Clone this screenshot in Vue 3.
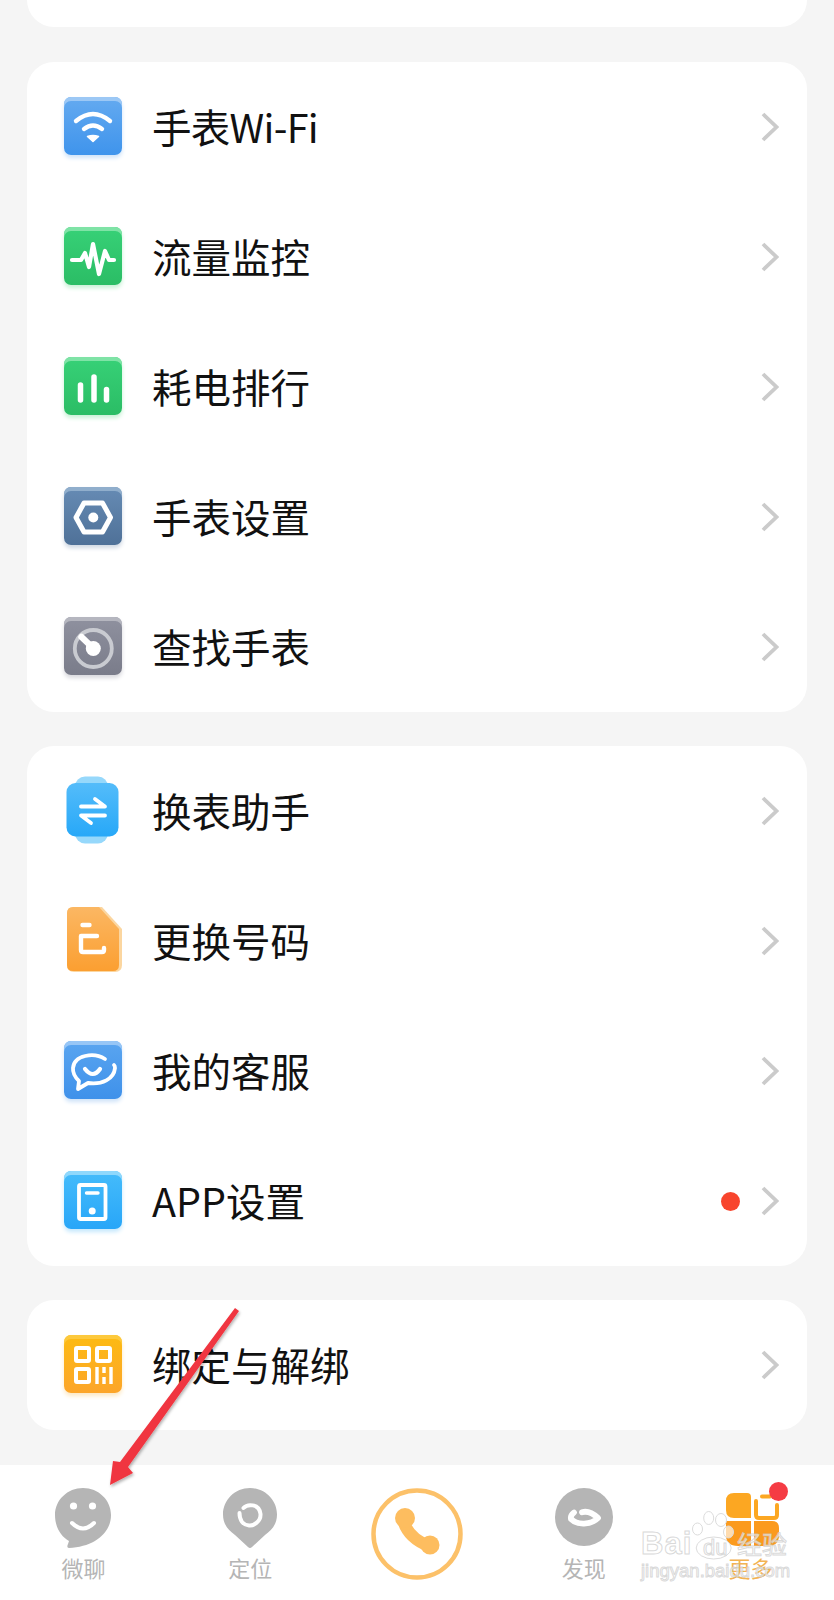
<template>
  <div class="page">
    <div class="stub"></div>

    <div v-for="(group, g) in groups" :key="g" class="card">
      <div v-for="row in group" :key="row.label" class="row">
        <div class="tile" :class="'t-' + row.icon">
          <svg viewBox="0 0 58 58" width="58" height="58" class="glyph">
            <g v-if="row.icon === 'wifi'" fill="none" stroke="#fff" stroke-width="4.4" stroke-linecap="round">
              <path d="M12 24 Q29 10 46 24" />
              <path d="M20 32 Q29 25 38 32" />
              <path d="M23.500 39.500 Q29 37.500 34.500 39.500 L29 44.500 Z" fill="#fff" stroke-width="1.500" stroke-linejoin="round" />
            </g>
            <path v-else-if="row.icon === 'flow'" d="M8 33 H17 L21 26 L25 40 L29 17 L35 47 L41 24 L45 33 H50" fill="none" stroke="#fff" stroke-width="4.2" stroke-linecap="round" stroke-linejoin="round" />
            <g v-else-if="row.icon === 'bars'" stroke="#fff" stroke-width="5.500" stroke-linecap="round">
              <path d="M16.500 28 V43" />
              <path d="M30 20 V43" />
              <path d="M42.500 32.500 V43" />
            </g>
            <g v-else-if="row.icon === 'hex'">
              <path d="M12 30.500 L20 16 H38.500 L46.500 30.500 L38.500 45 H20 Z" fill="none" stroke="#fff" stroke-width="5" stroke-linejoin="round" />
              <circle cx="29.300" cy="30.500" r="5" fill="#fff" />
            </g>
            <g v-else-if="row.icon === 'gauge'">
              <circle cx="29.300" cy="31.500" r="18.500" fill="none" stroke="#c9cbd1" stroke-width="3.800" />
              <path d="M17.500 20 L29 31" stroke="#fff" stroke-width="6.400" stroke-linecap="round" />
              <circle cx="29.300" cy="31.500" r="7.500" fill="#fff" />
            </g>
            <g v-else-if="row.icon === 'swap'" transform="translate(0 1)">
              <rect x="11" y="-5.500" width="33" height="67" rx="10" fill="#96d8fb" />
              <rect x="2.500" y="1" width="52" height="53.500" rx="9" fill="url(#swapFill)" />
              <defs>
                <linearGradient id="swapFill" x1="0" y1="0" x2="0" y2="1">
                  <stop offset="0" stop-color="#54bcfa" />
                  <stop offset="1" stop-color="#27a8f8" />
                </linearGradient>
              </defs>
              <path d="M17 24.500 H41 L31 17 M41 33.500 H17 L27 41" fill="none" stroke="#fff" stroke-width="3.800" stroke-linecap="round" stroke-linejoin="round" />
            </g>
            <g v-else-if="row.icon === 'file'">
              <path d="M10 -4 H38 L58 18 V54 Q58 61 51 61 H10 Q3 61 3 54 V3 Q3 -4 10 -4 Z" fill="#fbd6a0" />
              <path d="M9 -4 H35 L55 18 V54 Q55 60 49 60 H9 Q3 60 3 54 V2 Q3 -4 9 -4 Z" fill="url(#fileFill)" />
              <defs>
                <linearGradient id="fileFill" x1="0" y1="0" x2="0" y2="1">
                  <stop offset="0" stop-color="#fbb763" />
                  <stop offset="1" stop-color="#fb9f31" />
                </linearGradient>
              </defs>
              <path d="M18.500 14 H25.500 M17 25 V39 Q17 41 19 41 H38 Q40 41 40 39 V37 M17 25 H33" fill="none" stroke="#fff" stroke-width="4.400" stroke-linecap="round" stroke-linejoin="round" />
            </g>
            <g v-else-if="row.icon === 'chat'" fill="none" stroke="#fff" stroke-width="3.800" stroke-linecap="round" stroke-linejoin="round">
              <path d="M41 18 C30 11 10 14 9 27 C8.500 34 13 38 15 40 L14 48 L24 42 C38 44 50 38 51 27 C51 26 51 25 50 24" />
              <path d="M21 28 Q29 38 36 28" stroke-width="4.200" />
            </g>
            <g v-else-if="row.icon === 'app'">
              <rect x="15" y="14" width="26.500" height="34" rx="1.500" fill="none" stroke="#fff" stroke-width="3.800" />
              <path d="M22.500 22 H34" stroke="#fff" stroke-width="3.400" stroke-linecap="round" />
              <circle cx="28.200" cy="40" r="3.500" fill="#fff" />
            </g>
            <g v-else-if="row.icon === 'qr'" fill="none" stroke="#fff" stroke-width="4" stroke-linejoin="round">
              <rect x="12" y="13" width="13" height="13" rx="1" />
              <rect x="33" y="13" width="13" height="13" rx="1" />
              <rect x="12" y="34" width="13" height="13" rx="1" />
              <path d="M33 32 V49 M40 32 V38 M40 42 V49 M47 32 V49" stroke-width="3.400" />
            </g>
          </svg>
        </div>
        <span class="label" :class="{ tight: row.tight }">{{ row.label }}</span>
        <span v-if="row.dot" class="dot"></span>
        <svg class="chev" viewBox="0 0 18 30" width="18" height="30">
          <path d="M2 2 L15.500 15 L2 28" fill="none" stroke="#cbcbcb" stroke-width="3.800" />
        </svg>
      </div>
    </div>

    <div class="tabbar">
      <div class="tab">
        <svg viewBox="0 0 56 60" width="56" height="60">
          <path d="M28 0 C43.500 0 56 12 56 27 C56 46 38 59 14 60 C12 60 12 58 13 56 L14 53 C5 48 0 38 0 27 C0 12 12.500 0 28 0 Z" fill="#b5b5b5" />
          <circle cx="18.500" cy="18" r="3.600" fill="#fff" />
          <circle cx="37.500" cy="18" r="3.600" fill="#fff" />
          <path d="M17 35 Q28 46 39 35" fill="none" stroke="#fff" stroke-width="4" stroke-linecap="round" />
        </svg>
        <span>微聊</span>
      </div>
      <div class="tab">
        <svg viewBox="0 0 54 60" width="54" height="60">
          <path d="M27 0 C42 0 54 12 54 26.500 C54 36 49 42 42 47 L29 59 Q27 61 25 59 L12 47 C5 42 0 36 0 26.500 C0 12 12 0 27 0 Z" fill="#b5b5b5" />
          <path d="M20.500 20 C24 16 36 15 37.500 26 C38 34 30 38 26 37.500 C20 37 16.500 32 16.500 25" fill="none" stroke="#fff" stroke-width="4" stroke-linecap="round" />
        </svg>
        <span>定位</span>
      </div>
      <div class="tab call">
        <svg viewBox="0 0 92 92" width="92" height="92">
          <circle cx="46" cy="46" r="43.500" fill="none" stroke="#fcc169" stroke-width="4.500" />
          <path d="M32 32 Q37 50 58 58" fill="none" stroke="#fdbd5f" stroke-width="12" stroke-linecap="round" />
          <circle cx="34" cy="30" r="10" fill="#fdbd5f" />
          <circle cx="59" cy="57" r="9.500" fill="#fdbd5f" />
        </svg>
      </div>
      <div class="tab">
        <svg viewBox="0 0 58 60" width="58" height="60">
          <circle cx="29" cy="29" r="29" fill="#b5b5b5" />
          <path d="M19 24.500 C16.500 26.500 15.500 29 16 31 C22 37.500 36 37 43 30 C37 24.500 31 23 27 24.300" fill="none" stroke="#fff" stroke-width="5.800" stroke-linejoin="round" stroke-linecap="round" />
        </svg>
        <span>发现</span>
      </div>
      <div class="tab more">
        <svg viewBox="0 0 54 56" width="54" height="56">
          <path d="M8 0 H21 Q25 0 25 4 V25 H8 Q0 25 0 17 V8 Q0 0 8 0 Z" fill="#fca722" />
          <path d="M30 8 V22 Q30 25 33 25 H48 Q51 25 51 22 V12 M36 3.500 H44" fill="none" stroke="#fca722" stroke-width="4" stroke-linecap="round" stroke-linejoin="round" />
          <path d="M0 28 H25 V53 H12 Q0 53 0 42 Z" fill="#fb9a1d" />
          <path d="M28 28 H46 Q53 28 53 35 V42 Q53 53 42 53 H28 Z" fill="#fb9a1d" />
        </svg>
        <span>更多</span>
        <i class="badge"></i>
      </div>
    </div>

    <!-- red annotation arrow, drawn over the page -->
    <svg class="arrow" viewBox="0 0 150 200" width="150" height="200">
      <defs>
        <filter id="arrowShadow" x="-20%" y="-20%" width="140%" height="140%">
          <feDropShadow dx="1" dy="2" stdDeviation="1.500" flood-color="#000" flood-opacity="0.3" />
        </filter>
      </defs>
      <path d="M135 8 L139 11 L28 167 L33 173 L10 185 L13 161 L20 162 Z" fill="#f0353f" filter="url(#arrowShadow)" />
    </svg>

    <!-- baidu watermark -->
    <div class="mark">
      <svg class="paw" viewBox="0 0 42 52" width="42" height="52">
        <g fill="rgba(255,255,255,.65)" stroke="#dcdcdc" stroke-width="1">
          <ellipse cx="5.500" cy="19" rx="5" ry="6" />
          <ellipse cx="16.700" cy="8" rx="5" ry="6.500" />
          <ellipse cx="29" cy="10" rx="5.500" ry="6.500" />
          <ellipse cx="36.500" cy="22" rx="5" ry="6" />
          <ellipse cx="21.700" cy="38" rx="17.500" ry="11" />
        </g>
      </svg>
      <span class="m-bai">Bai</span>
      <span class="m-du">du</span>
      <span class="m-jy">经验</span>
      <span class="m-url">jingyan.baidu.com</span>
    </div>
  </div>
</template>

<script setup>
const groups = [
  [
    { label: '手表Wi-Fi', icon: 'wifi', tight: true },
    { label: '流量监控', icon: 'flow' },
    { label: '耗电排行', icon: 'bars' },
    { label: '手表设置', icon: 'hex' },
    { label: '查找手表', icon: 'gauge' },
  ],
  [
    { label: '换表助手', icon: 'swap' },
    { label: '更换号码', icon: 'file' },
    { label: '我的客服', icon: 'chat' },
    { label: 'APP设置', icon: 'app', dot: true },
  ],
  [{ label: '绑定与解绑', icon: 'qr' }],
]
</script>

<style>
html,
body {
  margin: 0;
  background: #f5f5f5;
}
</style>

<style scoped>
.page {
  position: relative;
  width: 834px;
  height: 1600px;
  overflow: hidden;
  background: #f5f5f5;
  font-family: "Noto Sans CJK SC", sans-serif;
  display: flex;
  flex-direction: column;
}
.stub {
  height: 27px;
  margin: 0 27px 35px;
  background: #fff;
  border-radius: 0 0 27px 27px;
}
.card {
  margin: 0 27px 34px;
  background: #fff;
  border-radius: 27px;
}
.row {
  height: 130px;
  display: flex;
  align-items: center;
  padding: 0 28px 0 36.500px;
}
.tile {
  width: 58px;
  height: 58px;
  margin-top: -3px;
  border-radius: 7px;
  flex-shrink: 0;
}
.glyph {
  display: block;
  overflow: visible;
}
.t-wifi {
  background: linear-gradient(#64aaf0, #3f94ec);
  box-shadow: inset 0 4px 0 #9cc8f5, 0 3px 4px #cfe3f9;
}
.t-flow {
  background: linear-gradient(#37d177, #2bbd65);
  box-shadow: inset 0 4px 0 #7fe3a6, 0 3px 4px #c8f1d6;
}
.t-bars {
  background: linear-gradient(#37d177, #2bbd65);
  box-shadow: inset 0 4px 0 #7fe3a6, 0 3px 4px #c8f1d6;
}
.t-hex {
  background: linear-gradient(#668bb4, #4f7198);
  box-shadow: inset 0 4px 0 #90aecc, 0 3px 4px #cfd8e3;
}
.t-gauge {
  background: linear-gradient(#8f919f, #7a7c8a);
  box-shadow: inset 0 4px 0 #b5b6bf, 0 3px 4px #d9d9de;
}
.t-chat {
  background: linear-gradient(#5aa5f0, #3f91ea);
  box-shadow: inset 0 4px 0 #97c6f6, 0 3px 4px #cfe3f9;
}
.t-app {
  background: linear-gradient(#45bcfb, #28a6f8);
  box-shadow: inset 0 4px 0 #8fd8fc, 0 3px 4px #c6e8fd;
}
.t-qr {
  background: linear-gradient(#fdbb12, #fca52a);
  box-shadow: inset 0 4px 0 #fdc93c, 0 3px 4px #fde9c4;
}
.label {
  flex: 1;
  margin: -3px 0 0 30.500px;
  font-size: 39.500px;
  line-height: 50px;
  color: #111;
}
.tight {
  letter-spacing: -0.700px;
}
.dot {
  width: 19px;
  height: 19px;
  margin-right: 21px;
  border-radius: 50%;
  background: #f8452d;
}
.chev {
  flex-shrink: 0;
}
.tabbar {
  position: absolute;
  left: 0;
  right: 0;
  bottom: 0;
  height: 135px;
  display: grid;
  grid-template-columns: repeat(5, 1fr);
  background: #fff;
}
.tab {
  position: relative;
  display: flex;
  flex-direction: column;
  align-items: center;
  padding-top: 23px;
  font-size: 22px;
  line-height: 28px;
  color: #b5b5b5;
}
.tab svg {
  display: block;
}
.tab span {
  position: absolute;
  top: 88px;
}
.call svg {
  overflow: visible;
}
.more {
  color: #f3b352;
  padding-top: 28px;
}
.more svg {
  margin-left: 4px;
}
.badge {
  position: absolute;
  top: 17px;
  left: 102px;
  width: 19px;
  height: 19px;
  border-radius: 50%;
  background: #f53c44;
}
.arrow {
  position: absolute;
  left: 100px;
  top: 1300px;
}
.mark {
  position: absolute;
  left: 0;
  top: 0;
  width: 834px;
  height: 1600px;
  pointer-events: none;
  font-family: "Liberation Sans", "Noto Sans CJK SC", sans-serif;
  color: rgba(255, 255, 255, 0.65);
  -webkit-text-stroke: 1px rgba(200, 200, 200, 0.7);
}
.mark span {
  position: absolute;
  white-space: nowrap;
}
.paw {
  position: absolute;
  left: 692px;
  top: 1510px;
}
.m-bai {
  left: 641px;
  top: 1526px;
  font-size: 31px;
  font-weight: 700;
  line-height: 36px;
  letter-spacing: 1px;
}
.m-du {
  left: 703px;
  top: 1535px;
  font-size: 22px;
  line-height: 26px;
}
.m-jy {
  left: 737px;
  top: 1530px;
  font-size: 25px;
  line-height: 30px;
}
.m-url {
  left: 641px;
  top: 1560px;
  font-size: 18.500px;
  line-height: 22px;
}
</style>
